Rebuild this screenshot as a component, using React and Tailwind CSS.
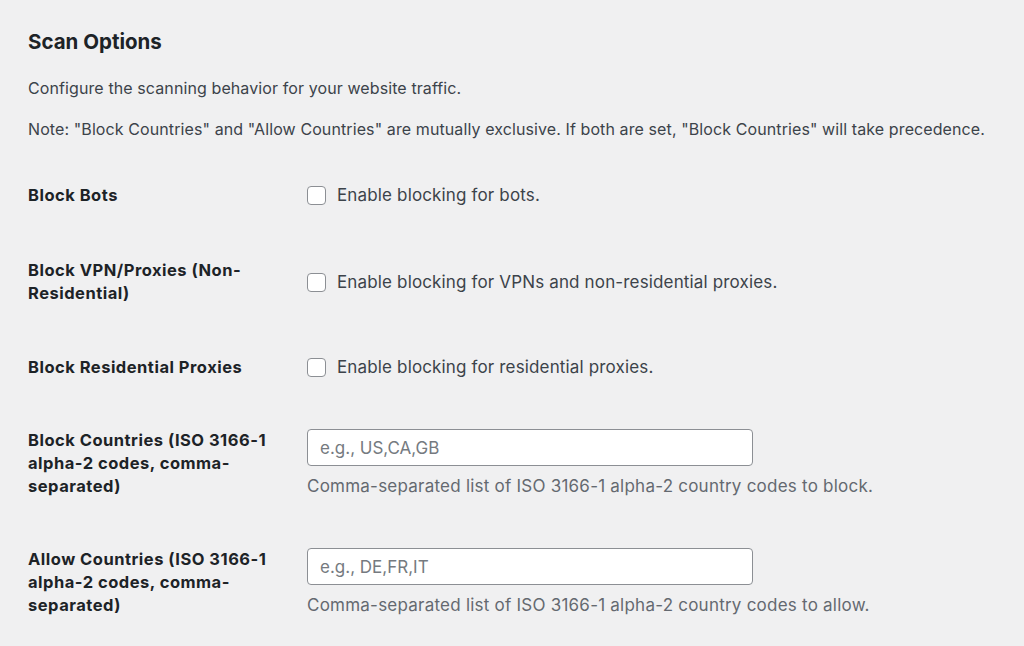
import React from 'react';

const font = { fontFamily: 'Inter, "Liberation Sans", sans-serif' };

const CheckRow = ({ label, text, pad }) => (
  <div className={`flex items-center ${pad}`}>
    <div className="w-[279px] shrink-0 pr-[13px] text-[16.5px] leading-[23px] font-bold tracking-[0.5px] text-[#1d2327]">
      {label}
    </div>
    <label className="flex items-center gap-[11px] text-[17px] leading-[23px] tracking-[0.15px] text-[#3c434a]">
      <span className="w-[19px] h-[19px] rounded-[4px] border border-[#8c8f94] bg-white"></span>
      {text}
    </label>
  </div>
);

const InputRow = ({ label, placeholder, help }) => (
  <div className="flex items-center py-[25px]">
    <div className="w-[279px] shrink-0 pr-[13px] text-[16.5px] leading-[23px] font-bold tracking-[0.5px] text-[#1d2327]">
      {label}
    </div>
    <div className="flex flex-col">
      <input
        type="text"
        placeholder={placeholder}
        className="w-[446px] h-[37px] px-[12px] rounded-[4px] border border-[#8c8f94] bg-white text-[17px] text-[#1d2327] placeholder-[#757a80] outline-none"
      />
      <p className="mt-[9px] text-[17px] leading-[23px] tracking-[0.23px] text-[#646970]">{help}</p>
    </div>
  </div>
);

export default function App() {
  return (
    <div className="min-h-screen bg-[#f0f0f1] pl-[28px] pt-[29px]" style={font}>
      <h2 className="text-[20.5px] leading-[26px] font-bold text-[#1d2327]">Scan Options</h2>
      <p className="mt-[22px] text-[16px] leading-[22px] tracking-[0.1px] text-[#3c434a]">
        Configure the scanning behavior for your website traffic.
      </p>
      <p className="mt-[19px] text-[16px] leading-[22px] tracking-[0.1px] text-[#3c434a]">
        Note: "Block Countries" and "Allow Countries" are mutually exclusive. If both are set, "Block Countries" will take precedence.
      </p>

      <div className="mt-[18px]">
        <CheckRow pad="py-[26px]" label="Block Bots" text="Enable blocking for bots." />
        <CheckRow pad="py-[26px]" label="Block VPN/Proxies (Non-Residential)" text="Enable blocking for VPNs and non-residential proxies." />
        <CheckRow pad="py-[25px]" label="Block Residential Proxies" text="Enable blocking for residential proxies." />
        <InputRow
          label="Block Countries (ISO 3166-1 alpha-2 codes, comma-separated)"
          placeholder="e.g., US,CA,GB"
          help="Comma-separated list of ISO 3166-1 alpha-2 country codes to block."
        />
        <InputRow
          label="Allow Countries (ISO 3166-1 alpha-2 codes, comma-separated)"
          placeholder="e.g., DE,FR,IT"
          help="Comma-separated list of ISO 3166-1 alpha-2 country codes to allow."
        />
      </div>
    </div>
  );
}
